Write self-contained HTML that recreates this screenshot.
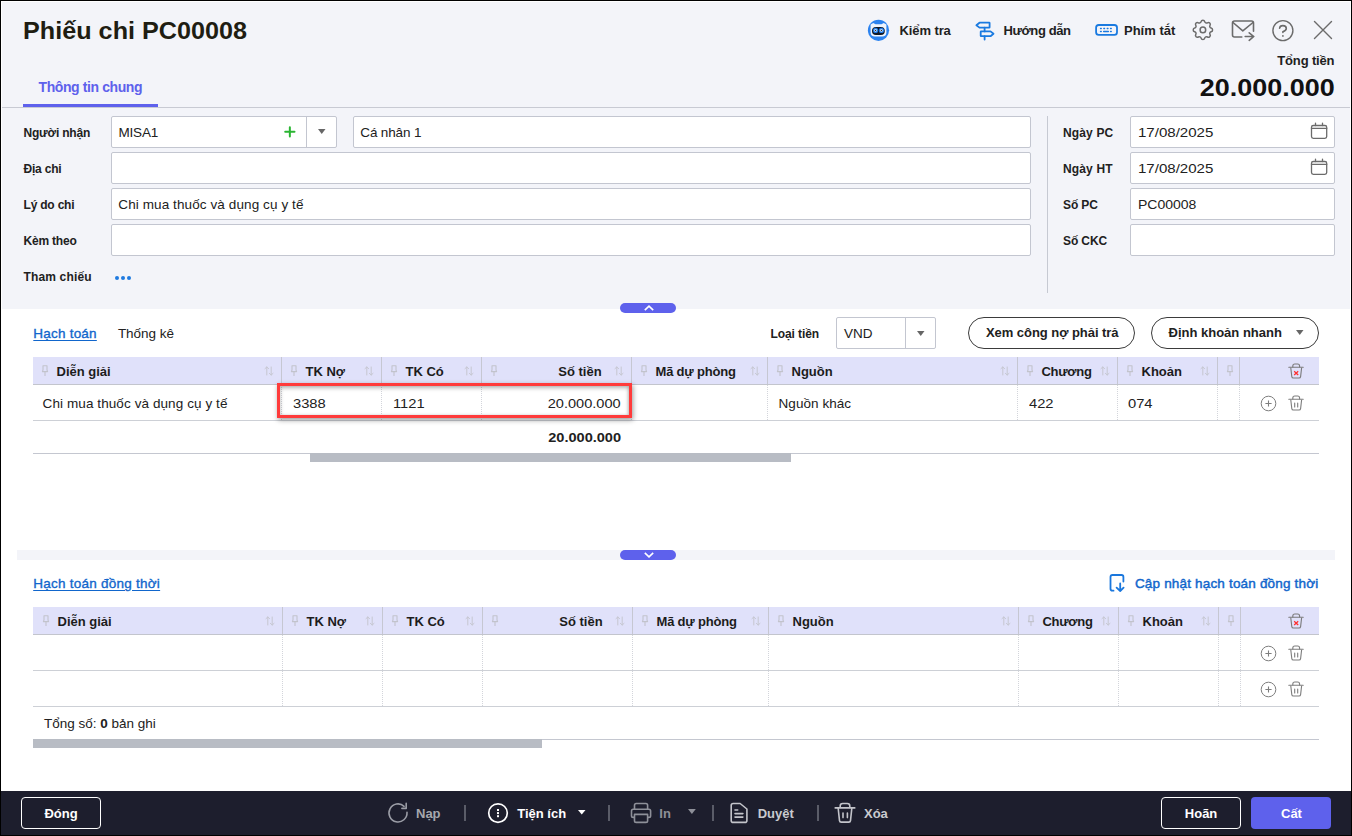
<!DOCTYPE html>
<html><head><meta charset="utf-8"><style>
html,body{margin:0;padding:0;width:1352px;height:836px;overflow:hidden;background:#fff}
body{position:relative;font-family:"Liberation Sans", sans-serif}
.t{position:absolute;white-space:nowrap;line-height:1}
.r{position:absolute}
svg.r{overflow:visible}
</style></head><body>
<div class="r" style="left:0px;top:0px;width:1352px;height:836px;background:#000"></div>
<div class="r" style="left:1px;top:1px;width:1350px;height:834px;background:#fff"></div>
<div class="r" style="left:2px;top:2px;width:1348px;height:307px;background:#f3f4f9"></div>
<div class="t" style="left:22.7px;top:19.38px;font-size:24px;font-weight:bold;color:#201d12;letter-spacing:0px;transform:scaleX(1.05);transform-origin:0 50%">Phiếu chi PC00008</div>
<div class="t" style="left:38.5px;top:79.65px;font-size:14px;font-weight:bold;color:#5e61ec;letter-spacing:-0.4px;">Thông tin chung</div>
<div class="r" style="left:23px;top:104px;width:135px;height:3px;background:#5e61ec"></div>
<div class="r" style="left:2px;top:107px;width:1348px;height:1px;background:#c8cad3"></div>
<div class="t" style="left:899.5px;top:23.90px;font-size:13px;font-weight:bold;color:#212121;letter-spacing:-0.1px;">Kiểm tra</div>
<div class="t" style="left:1003.5px;top:23.90px;font-size:13px;font-weight:bold;color:#212121;letter-spacing:-0.4px;">Hướng dẫn</div>
<div class="t" style="left:1124px;top:23.90px;font-size:13px;font-weight:bold;color:#212121;letter-spacing:0px;">Phím tắt</div>
<div class="t" style="right:17.59999999999991px;top:53.90px;font-size:13px;font-weight:bold;color:#212121;letter-spacing:-0.15px;">Tổng tiền</div>
<div class="t" style="right:17.40000000000009px;top:75.96px;font-size:24.5px;font-weight:bold;color:#111;letter-spacing:0px;transform:scaleX(1.1);transform-origin:100% 50%">20.000.000</div>
<div class="t" style="left:23.5px;top:127.34px;font-size:12px;font-weight:bold;color:#212121;letter-spacing:-0.2px;">Người nhận</div>
<div class="t" style="left:23.5px;top:163.14px;font-size:12px;font-weight:bold;color:#212121;letter-spacing:-0.2px;">Địa chi</div>
<div class="t" style="left:23.5px;top:199.04px;font-size:12px;font-weight:bold;color:#212121;letter-spacing:-0.2px;">Lý do chi</div>
<div class="t" style="left:23.5px;top:235.14px;font-size:12px;font-weight:bold;color:#212121;letter-spacing:-0.2px;">Kèm theo</div>
<div class="t" style="left:23.5px;top:270.94px;font-size:12px;font-weight:bold;color:#212121;letter-spacing:0.15px;">Tham chiếu</div>
<div class="r" style="left:111px;top:116px;width:226px;height:32px;background:#fff;border:1px solid #c3c6d0;border-radius:2px;box-sizing:border-box"></div>
<div class="r" style="left:306px;top:117px;width:1px;height:30px;background:#c3c6d0"></div>
<div class="r" style="left:353px;top:116px;width:678px;height:32px;background:#fff;border:1px solid #c3c6d0;border-radius:2px;box-sizing:border-box"></div>
<div class="r" style="left:111px;top:152px;width:920px;height:32px;background:#fff;border:1px solid #c3c6d0;border-radius:2px;box-sizing:border-box"></div>
<div class="r" style="left:111px;top:188px;width:920px;height:32px;background:#fff;border:1px solid #c3c6d0;border-radius:2px;box-sizing:border-box"></div>
<div class="r" style="left:111px;top:224px;width:920px;height:32px;background:#fff;border:1px solid #c3c6d0;border-radius:2px;box-sizing:border-box"></div>
<div class="t" style="left:118.5px;top:125.67px;font-size:13.5px;font-weight:normal;color:#212121;letter-spacing:-0.2px;">MISA1</div>
<div class="t" style="left:360.3px;top:125.67px;font-size:13.5px;font-weight:normal;color:#212121;letter-spacing:-0.15px;">Cá nhân 1</div>
<div class="t" style="left:118.3px;top:197.67px;font-size:13.5px;font-weight:normal;color:#212121;letter-spacing:0.1px;">Chi mua thuốc và dụng cụ y tế</div>
<div class="r" style="left:1047px;top:116px;width:1px;height:177px;background:#c6c9d2"></div>
<div class="t" style="left:1063px;top:127.34px;font-size:12px;font-weight:bold;color:#212121;letter-spacing:0.15px;">Ngày PC</div>
<div class="t" style="left:1063px;top:163.14px;font-size:12px;font-weight:bold;color:#212121;letter-spacing:0.15px;">Ngày HT</div>
<div class="t" style="left:1063px;top:199.04px;font-size:12px;font-weight:bold;color:#212121;letter-spacing:-0.1px;">Số PC</div>
<div class="t" style="left:1063px;top:235.14px;font-size:12px;font-weight:bold;color:#212121;letter-spacing:-0.1px;">Số CKC</div>
<div class="r" style="left:1130px;top:116px;width:205px;height:32px;background:#fff;border:1px solid #c3c6d0;border-radius:2px;box-sizing:border-box"></div>
<div class="r" style="left:1130px;top:152px;width:205px;height:32px;background:#fff;border:1px solid #c3c6d0;border-radius:2px;box-sizing:border-box"></div>
<div class="r" style="left:1130px;top:188px;width:205px;height:32px;background:#fff;border:1px solid #c3c6d0;border-radius:2px;box-sizing:border-box"></div>
<div class="r" style="left:1130px;top:224px;width:205px;height:32px;background:#fff;border:1px solid #c3c6d0;border-radius:2px;box-sizing:border-box"></div>
<div class="t" style="left:1137.5px;top:125.67px;font-size:13.5px;font-weight:normal;color:#212121;letter-spacing:0px;transform:scaleX(1.115);transform-origin:0 50%">17/08/2025</div>
<div class="t" style="left:1137.5px;top:161.67px;font-size:13.5px;font-weight:normal;color:#212121;letter-spacing:0px;transform:scaleX(1.115);transform-origin:0 50%">17/08/2025</div>
<div class="t" style="left:1137.5px;top:197.67px;font-size:13.5px;font-weight:normal;color:#212121;letter-spacing:0px;transform:scaleX(1.037);transform-origin:0 50%">PC00008</div>
<div class="r" style="left:620px;top:303px;width:56px;height:10px;background:#5e61ec;border-radius:5px"></div>
<div class="t" style="left:33.3px;top:326.97px;font-size:13.5px;font-weight:normal;color:#1166cc;letter-spacing:0.22px;text-decoration:underline;text-underline-offset:2px;-webkit-text-stroke:0.35px #1166cc">Hạch toán</div>
<div class="t" style="left:117.9px;top:326.97px;font-size:13.5px;font-weight:normal;color:#212121;letter-spacing:-0.04px;">Thống kê</div>
<div class="t" style="left:770.5px;top:328.04px;font-size:12px;font-weight:bold;color:#212121;letter-spacing:-0.1px;">Loại tiền</div>
<div class="r" style="left:836px;top:317px;width:100px;height:32px;background:#fff;border:1px solid #c3c6d0;border-radius:2px;box-sizing:border-box"></div>
<div class="r" style="left:905px;top:318px;width:1px;height:30px;background:#c3c6d0"></div>
<div class="t" style="left:844px;top:326.67px;font-size:13.5px;font-weight:normal;color:#212121;letter-spacing:0px;">VND</div>
<div class="r" style="left:968px;top:317px;width:167px;height:32px;border:1px solid #3b3b3b;border-radius:16px;box-sizing:border-box;background:#fff"></div>
<div class="t" style="left:986px;top:326.40px;font-size:13px;font-weight:bold;color:#212121;letter-spacing:-0.05px;">Xem công nợ phải trả</div>
<div class="r" style="left:1151px;top:317px;width:168px;height:32px;border:1px solid #3b3b3b;border-radius:16px;box-sizing:border-box;background:#fff"></div>
<div class="t" style="left:1168.5px;top:326.40px;font-size:13px;font-weight:bold;color:#212121;letter-spacing:0px;">Định khoản nhanh</div>
<div class="r" style="left:17px;top:550px;width:1318px;height:10px;background:#f3f4f9"></div>
<div class="r" style="left:620px;top:550px;width:56px;height:10px;background:#5e61ec;border-radius:5px"></div>
<div class="t" style="left:33.2px;top:576.97px;font-size:13.5px;font-weight:normal;color:#1166cc;letter-spacing:0.25px;text-decoration:underline;text-underline-offset:2px;-webkit-text-stroke:0.35px #1166cc">Hạch toán đồng thời</div>
<div class="t" style="left:1134.9px;top:577.07px;font-size:13.5px;font-weight:normal;color:#1166cc;letter-spacing:0.18px;-webkit-text-stroke:0.45px #1166cc">Cập nhật hạch toán đồng thời</div>
<div class="t" style="left:44px;top:717.27px;font-size:13.5px;font-weight:normal;color:#212121;letter-spacing:0px;">Tổng số: <b>0</b> bản ghi</div>
<svg class="r" style="left:866px;top:18px" width="26" height="26" viewBox="0 0 26 26">
<circle cx="12.5" cy="12.3" r="10.6" fill="#2c83f0"/>
<path d="M4.6 6.5 L7.3 5 L9.5 6.2 H15.5 L17.7 5 L20.4 6.5 V14.5 Q20.4 18.4 16 18.6 H9 Q4.6 18.4 4.6 14.5 Z" fill="#eef4fd"/>
<rect x="6" y="9" width="12.8" height="7.9" rx="3.9" fill="#101826"/>
<circle cx="9.6" cy="12.4" r="2.6" fill="#1e7be8"/><circle cx="15.4" cy="12.4" r="2.6" fill="#1e7be8"/>
<circle cx="9.6" cy="12.4" r="1.3" fill="#dfe9f7"/><circle cx="15.4" cy="12.4" r="1.3" fill="#dfe9f7"/>
<circle cx="9.6" cy="12.4" r="0.6" fill="#222"/><circle cx="15.4" cy="12.4" r="0.6" fill="#222"/>
</svg>
<svg class="r" style="left:972px;top:18px" width="26" height="26" viewBox="0 0 26 26">
<g fill="none" stroke="#1a7ae0" stroke-width="1.8" stroke-linejoin="round" stroke-linecap="round">
<path d="M4.4 7.3 L7.5 4.7 H17.2 Q17.6 4.7 17.6 5.1 V9.2 Q17.6 9.6 17.2 9.6 H7.5 Z"/>
<path d="M12.6 9.6 V13.4"/>
<path d="M8.7 13.8 Q8.7 13.4 9.1 13.4 H18.5 L21.5 15.8 L18.5 18.2 H9.1 Q8.7 18.2 8.7 17.8 Z"/>
<path d="M12.6 18.2 V21.5"/>
</g></svg>
<svg class="r" style="left:1092px;top:20px" width="28" height="20" viewBox="0 0 28 20">
<rect x="4.1" y="5" width="20.9" height="9.9" rx="2.6" fill="none" stroke="#1a7ae0" stroke-width="1.8"/>
<g stroke="#1a7ae0" stroke-width="1.3" stroke-linecap="round">
<path d="M8.5 8.5 H9.3 M11.8 8.5 H12.6 M15.2 8.5 H16 M18.5 8.5 H19.3 M8.5 11.5 H9.3 M11.6 11.5 H16.4 M18.5 11.5 H19.3"/>
</g></svg>
<svg class="r" style="left:1190px;top:17.1px" width="25.8" height="25.8" viewBox="0 0 24 24"><g fill="none" stroke="#6b6b6b" stroke-width="1.4" stroke-linecap="round" stroke-linejoin="round"><path d="M10.325 4.317c.426-1.756 2.924-1.756 3.35 0a1.724 1.724 0 0 0 2.573 1.066c1.543-.94 3.31.826 2.37 2.37a1.724 1.724 0 0 0 1.065 2.572c1.756.426 1.756 2.924 0 3.35a1.724 1.724 0 0 0-1.066 2.573c.94 1.543-.826 3.31-2.37 2.37a1.724 1.724 0 0 0-2.572 1.065c-.426 1.756-2.924 1.756-3.35 0a1.724 1.724 0 0 0-2.573-1.066c-1.543.94-3.31-.826-2.37-2.37a1.724 1.724 0 0 0-1.065-2.572c-1.756-.426-1.756-2.924 0-3.35a1.724 1.724 0 0 0 1.066-2.573c-.94-1.543.826-3.31 2.37-2.37.996.608 2.296.07 2.572-1.065z"/><circle cx="12" cy="12" r="2.6"/></g></svg>
<svg class="r" style="left:1230px;top:18px" width="28" height="26" viewBox="0 0 28 26">
<g fill="none" stroke="#6b6b6b" stroke-width="1.6" stroke-linecap="round" stroke-linejoin="round">
<path d="M11.8 19 H4.5 Q2.5 19 2.5 17 V5 Q2.5 3 4.5 3 H21.5 Q23.5 3 23.5 5 V13.2"/>
<path d="M3 4.5 L12.8 12.8 L23 4.5"/>
<path d="M15.2 18.5 H23.8 M19.2 14.8 L23.8 18.5 L19.2 22.3"/>
</g></svg>
<svg class="r" style="left:1270px;top:18px" width="26" height="26" viewBox="0 0 26 26">
<circle cx="12.9" cy="12.6" r="10" fill="none" stroke="#6b6b6b" stroke-width="1.4"/>
<path d="M9.6 10.2 Q9.8 7.6 12.9 7.6 Q16.3 7.6 16.3 10.4 Q16.3 12.3 12.9 13.7 V14.4" fill="none" stroke="#6b6b6b" stroke-width="1.6" stroke-linecap="round"/>
<circle cx="12.9" cy="17.9" r="0.9" fill="#6b6b6b"/></svg>
<svg class="r" style="left:1312px;top:19px" width="22" height="22" viewBox="0 0 22 22">
<path d="M2.5 2.6 L19.5 19.4 M19.5 2.6 L2.5 19.4" stroke="#6b6b6b" stroke-width="1.4" stroke-linecap="round"/></svg>
<svg class="r" style="left:282px;top:124px" width="16" height="16" viewBox="0 0 16 16"><path d="M7.85 3.2 V12.5 M3.2 7.85 H12.5" stroke="#2ab532" stroke-width="2" stroke-linecap="round"/></svg>
<svg class="r" style="left:318.25px;top:129.0px" width="7.5" height="5" viewBox="0 0 7.5 5"><path d="M0 0 H7.5 L3.75 5 Z" fill="#666"/></svg>
<svg class="r" style="left:917.25px;top:330.5px" width="7.5" height="5" viewBox="0 0 7.5 5"><path d="M0 0 H7.5 L3.75 5 Z" fill="#666"/></svg>
<svg class="r" style="left:1296.25px;top:330.0px" width="7.5" height="5" viewBox="0 0 7.5 5"><path d="M0 0 H7.5 L3.75 5 Z" fill="#666"/></svg>
<svg class="r" style="left:1308px;top:121px" width="22" height="22" viewBox="0 0 22 22"><g fill="none" stroke="#6b6b6b" stroke-width="1.3" stroke-linecap="round">
<rect x="3.5" y="4.5" width="15.2" height="12.9" rx="1.8"/><path d="M3.5 7.4 H18.7 M7.5 2.1 V4.5 M14.5 2.1 V4.5"/></g></svg>
<svg class="r" style="left:1308px;top:157px" width="22" height="22" viewBox="0 0 22 22"><g fill="none" stroke="#6b6b6b" stroke-width="1.3" stroke-linecap="round">
<rect x="3.5" y="4.5" width="15.2" height="12.9" rx="1.8"/><path d="M3.5 7.4 H18.7 M7.5 2.1 V4.5 M14.5 2.1 V4.5"/></g></svg>
<div class="r" style="left:114.7px;top:275.5px;width:4.6px;height:4.6px;background:#1f7ae0;border-radius:50%"></div>
<div class="r" style="left:120.7px;top:275.5px;width:4.6px;height:4.6px;background:#1f7ae0;border-radius:50%"></div>
<div class="r" style="left:126.7px;top:275.5px;width:4.6px;height:4.6px;background:#1f7ae0;border-radius:50%"></div>
<svg class="r" style="left:644px;top:305px" width="10" height="6" viewBox="0 0 10 6"><path d="M0.8 5.2 L5 1.2 L9.2 5.2" fill="none" stroke="#fff" stroke-width="1.6"/></svg>
<svg class="r" style="left:644px;top:552px" width="10" height="6" viewBox="0 0 10 6"><path d="M0.8 0.8 L5 4.8 L9.2 0.8" fill="none" stroke="#fff" stroke-width="1.6"/></svg>
<svg class="r" style="left:1104px;top:570px" width="26" height="26" viewBox="0 0 26 26"><g fill="none" stroke="#1a77dd" stroke-width="1.8" stroke-linecap="round" stroke-linejoin="round">
<path d="M9.5 20.7 H8.4 Q6.5 20.7 6.5 18.8 V6.9 Q6.5 5 8.4 5 H17.5 Q19.4 5 19.4 6.9 V11.5"/>
<path d="M16.2 13.4 V21 M12.6 17.6 L16.2 21 L19.6 17.6"/></g></svg>
<div class="r" style="left:33px;top:357px;width:1286px;height:27px;background:#e0e1fa"></div>
<div class="r" style="left:33px;top:384px;width:1286px;height:1px;background:#c3c5cd"></div>
<div class="r" style="left:281px;top:357px;width:1px;height:27px;background:#c6c7d2"></div>
<div class="r" style="left:381px;top:357px;width:1px;height:27px;background:#c6c7d2"></div>
<div class="r" style="left:481px;top:357px;width:1px;height:27px;background:#c6c7d2"></div>
<div class="r" style="left:631px;top:357px;width:1px;height:27px;background:#c6c7d2"></div>
<div class="r" style="left:767px;top:357px;width:1px;height:27px;background:#c6c7d2"></div>
<div class="r" style="left:1017px;top:357px;width:1px;height:27px;background:#c6c7d2"></div>
<div class="r" style="left:1117px;top:357px;width:1px;height:27px;background:#c6c7d2"></div>
<div class="r" style="left:1217px;top:357px;width:1px;height:27px;background:#c6c7d2"></div>
<div class="r" style="left:1239px;top:357px;width:1px;height:27px;background:#c6c7d2"></div>
<svg class="r" style="left:41px;top:365px" width="8" height="12" viewBox="0 0 8 12"><g fill="none" stroke="#c2c3cc" stroke-width="1.1" stroke-linejoin="round">
<path d="M2 0.8 H6 V5 L6.6 6.6 H1.4 L2 5 Z"/><path d="M4 6.6 V11"/></g></svg>
<svg class="r" style="left:264px;top:366.3px" width="10" height="10" viewBox="0 0 10 10"><g fill="none" stroke="#c6c7d1" stroke-width="1" stroke-linecap="round" stroke-linejoin="round">
<path d="M2.8 9 V1 M1 2.6 L2.8 1 L4.6 2.6"/><path d="M7.2 1 V9 M5.4 7.4 L7.2 9 L9 7.4"/></g></svg>
<div class="t" style="left:56.5px;top:364.90px;font-size:13px;font-weight:bold;color:#1c1c1c;letter-spacing:0px;">Diễn giải</div>
<svg class="r" style="left:290px;top:365px" width="8" height="12" viewBox="0 0 8 12"><g fill="none" stroke="#c2c3cc" stroke-width="1.1" stroke-linejoin="round">
<path d="M2 0.8 H6 V5 L6.6 6.6 H1.4 L2 5 Z"/><path d="M4 6.6 V11"/></g></svg>
<svg class="r" style="left:364px;top:366.3px" width="10" height="10" viewBox="0 0 10 10"><g fill="none" stroke="#c6c7d1" stroke-width="1" stroke-linecap="round" stroke-linejoin="round">
<path d="M2.8 9 V1 M1 2.6 L2.8 1 L4.6 2.6"/><path d="M7.2 1 V9 M5.4 7.4 L7.2 9 L9 7.4"/></g></svg>
<div class="t" style="left:305.5px;top:364.90px;font-size:13px;font-weight:bold;color:#1c1c1c;letter-spacing:0px;">TK Nợ</div>
<svg class="r" style="left:390px;top:365px" width="8" height="12" viewBox="0 0 8 12"><g fill="none" stroke="#c2c3cc" stroke-width="1.1" stroke-linejoin="round">
<path d="M2 0.8 H6 V5 L6.6 6.6 H1.4 L2 5 Z"/><path d="M4 6.6 V11"/></g></svg>
<svg class="r" style="left:464px;top:366.3px" width="10" height="10" viewBox="0 0 10 10"><g fill="none" stroke="#c6c7d1" stroke-width="1" stroke-linecap="round" stroke-linejoin="round">
<path d="M2.8 9 V1 M1 2.6 L2.8 1 L4.6 2.6"/><path d="M7.2 1 V9 M5.4 7.4 L7.2 9 L9 7.4"/></g></svg>
<div class="t" style="left:405.5px;top:364.90px;font-size:13px;font-weight:bold;color:#1c1c1c;letter-spacing:0px;">TK Có</div>
<svg class="r" style="left:490px;top:365px" width="8" height="12" viewBox="0 0 8 12"><g fill="none" stroke="#c2c3cc" stroke-width="1.1" stroke-linejoin="round">
<path d="M2 0.8 H6 V5 L6.6 6.6 H1.4 L2 5 Z"/><path d="M4 6.6 V11"/></g></svg>
<svg class="r" style="left:614px;top:366.3px" width="10" height="10" viewBox="0 0 10 10"><g fill="none" stroke="#c6c7d1" stroke-width="1" stroke-linecap="round" stroke-linejoin="round">
<path d="M2.8 9 V1 M1 2.6 L2.8 1 L4.6 2.6"/><path d="M7.2 1 V9 M5.4 7.4 L7.2 9 L9 7.4"/></g></svg>
<div class="t" style="right:750.4px;top:364.90px;font-size:13px;font-weight:bold;color:#1c1c1c;letter-spacing:0px;">Số tiền</div>
<svg class="r" style="left:640px;top:365px" width="8" height="12" viewBox="0 0 8 12"><g fill="none" stroke="#c2c3cc" stroke-width="1.1" stroke-linejoin="round">
<path d="M2 0.8 H6 V5 L6.6 6.6 H1.4 L2 5 Z"/><path d="M4 6.6 V11"/></g></svg>
<svg class="r" style="left:750px;top:366.3px" width="10" height="10" viewBox="0 0 10 10"><g fill="none" stroke="#c6c7d1" stroke-width="1" stroke-linecap="round" stroke-linejoin="round">
<path d="M2.8 9 V1 M1 2.6 L2.8 1 L4.6 2.6"/><path d="M7.2 1 V9 M5.4 7.4 L7.2 9 L9 7.4"/></g></svg>
<div class="t" style="left:655.5px;top:364.90px;font-size:13px;font-weight:bold;color:#1c1c1c;letter-spacing:-0.2px;">Mã dự phòng</div>
<svg class="r" style="left:776px;top:365px" width="8" height="12" viewBox="0 0 8 12"><g fill="none" stroke="#c2c3cc" stroke-width="1.1" stroke-linejoin="round">
<path d="M2 0.8 H6 V5 L6.6 6.6 H1.4 L2 5 Z"/><path d="M4 6.6 V11"/></g></svg>
<svg class="r" style="left:1000px;top:366.3px" width="10" height="10" viewBox="0 0 10 10"><g fill="none" stroke="#c6c7d1" stroke-width="1" stroke-linecap="round" stroke-linejoin="round">
<path d="M2.8 9 V1 M1 2.6 L2.8 1 L4.6 2.6"/><path d="M7.2 1 V9 M5.4 7.4 L7.2 9 L9 7.4"/></g></svg>
<div class="t" style="left:791.5px;top:364.90px;font-size:13px;font-weight:bold;color:#1c1c1c;letter-spacing:0px;">Nguồn</div>
<svg class="r" style="left:1026px;top:365px" width="8" height="12" viewBox="0 0 8 12"><g fill="none" stroke="#c2c3cc" stroke-width="1.1" stroke-linejoin="round">
<path d="M2 0.8 H6 V5 L6.6 6.6 H1.4 L2 5 Z"/><path d="M4 6.6 V11"/></g></svg>
<svg class="r" style="left:1100px;top:366.3px" width="10" height="10" viewBox="0 0 10 10"><g fill="none" stroke="#c6c7d1" stroke-width="1" stroke-linecap="round" stroke-linejoin="round">
<path d="M2.8 9 V1 M1 2.6 L2.8 1 L4.6 2.6"/><path d="M7.2 1 V9 M5.4 7.4 L7.2 9 L9 7.4"/></g></svg>
<div class="t" style="left:1041.5px;top:364.90px;font-size:13px;font-weight:bold;color:#1c1c1c;letter-spacing:-0.3px;">Chương</div>
<svg class="r" style="left:1126px;top:365px" width="8" height="12" viewBox="0 0 8 12"><g fill="none" stroke="#c2c3cc" stroke-width="1.1" stroke-linejoin="round">
<path d="M2 0.8 H6 V5 L6.6 6.6 H1.4 L2 5 Z"/><path d="M4 6.6 V11"/></g></svg>
<svg class="r" style="left:1200px;top:366.3px" width="10" height="10" viewBox="0 0 10 10"><g fill="none" stroke="#c6c7d1" stroke-width="1" stroke-linecap="round" stroke-linejoin="round">
<path d="M2.8 9 V1 M1 2.6 L2.8 1 L4.6 2.6"/><path d="M7.2 1 V9 M5.4 7.4 L7.2 9 L9 7.4"/></g></svg>
<div class="t" style="left:1141.5px;top:364.90px;font-size:13px;font-weight:bold;color:#1c1c1c;letter-spacing:0px;">Khoản</div>
<svg class="r" style="left:1226px;top:365px" width="8" height="12" viewBox="0 0 8 12"><g fill="none" stroke="#c2c3cc" stroke-width="1.1" stroke-linejoin="round">
<path d="M2 0.8 H6 V5 L6.6 6.6 H1.4 L2 5 Z"/><path d="M4 6.6 V11"/></g></svg>
<svg class="r" style="left:1288px;top:363px" width="16" height="16" viewBox="0 0 16 16"><g fill="none" stroke="#7a7a7a" stroke-width="1.1" stroke-linecap="round" stroke-linejoin="round">
<path d="M0.8 4.2 H15.2"/><path d="M4.8 4 V3 Q4.8 1 6.8 1 H9.6 Q11.6 1 11.6 3 V4"/>
<path d="M2.8 5 L3.8 13.6 Q4 15 5.4 15 H11 Q12.4 15 12.6 13.6 L13.6 5"/></g><path d="M6.2 8.2 L10.2 12 M10.2 8.2 L6.2 12" stroke="#ff2d2d" stroke-width="1.2"/></svg>
<div class="r" style="left:281px;top:385px;width:1px;height:35px;background:repeating-linear-gradient(to bottom,#d3d5db 0 1px,transparent 1px 2px)"></div>
<div class="r" style="left:381px;top:385px;width:1px;height:35px;background:repeating-linear-gradient(to bottom,#d3d5db 0 1px,transparent 1px 2px)"></div>
<div class="r" style="left:481px;top:385px;width:1px;height:35px;background:repeating-linear-gradient(to bottom,#d3d5db 0 1px,transparent 1px 2px)"></div>
<div class="r" style="left:631px;top:385px;width:1px;height:35px;background:repeating-linear-gradient(to bottom,#d3d5db 0 1px,transparent 1px 2px)"></div>
<div class="r" style="left:767px;top:385px;width:1px;height:35px;background:repeating-linear-gradient(to bottom,#d3d5db 0 1px,transparent 1px 2px)"></div>
<div class="r" style="left:1017px;top:385px;width:1px;height:35px;background:repeating-linear-gradient(to bottom,#d3d5db 0 1px,transparent 1px 2px)"></div>
<div class="r" style="left:1117px;top:385px;width:1px;height:35px;background:repeating-linear-gradient(to bottom,#d3d5db 0 1px,transparent 1px 2px)"></div>
<div class="r" style="left:1217px;top:385px;width:1px;height:35px;background:repeating-linear-gradient(to bottom,#d3d5db 0 1px,transparent 1px 2px)"></div>
<div class="r" style="left:1239px;top:385px;width:1px;height:35px;background:repeating-linear-gradient(to bottom,#d3d5db 0 1px,transparent 1px 2px)"></div>
<div class="r" style="left:33px;top:420px;width:1286px;height:1px;background:#cdd0d6"></div>
<svg class="r" style="left:1259.5px;top:394.5px" width="17" height="17" viewBox="0 0 17 17"><circle cx="8.5" cy="8.5" r="7.3" fill="none" stroke="#7d7d7d" stroke-width="1"/>
<path d="M8.5 5.4 V11.6 M5.4 8.5 H11.6" stroke="#7d7d7d" stroke-width="1.1"/></svg>
<svg class="r" style="left:1288px;top:395px" width="16" height="16" viewBox="0 0 16 16"><g fill="none" stroke="#7d7d7d" stroke-width="1.1" stroke-linecap="round" stroke-linejoin="round">
<path d="M0.8 4.2 H15.2"/><path d="M4.8 4 V3 Q4.8 1 6.8 1 H9.6 Q11.6 1 11.6 3 V4"/>
<path d="M2.8 5 L3.8 13.6 Q4 15 5.4 15 H11 Q12.4 15 12.6 13.6 L13.6 5"/><path d="M6.7 8 V12 M9.7 8 V12"/></g></svg>
<div class="t" style="left:42.6px;top:396.57px;font-size:13.5px;font-weight:normal;color:#212121;letter-spacing:0.09px;">Chi mua thuốc và dụng cụ y tế</div>
<div class="t" style="left:292.5px;top:396.57px;font-size:13.5px;font-weight:normal;color:#212121;letter-spacing:0px;transform:scaleX(1.09);transform-origin:0 50%">3388</div>
<div class="t" style="left:392.8px;top:396.57px;font-size:13.5px;font-weight:normal;color:#212121;letter-spacing:0px;transform:scaleX(1.09);transform-origin:0 50%">1121</div>
<div class="t" style="right:731.7px;top:396.57px;font-size:13.5px;font-weight:normal;color:#212121;letter-spacing:0px;transform:scaleX(1.078);transform-origin:100% 50%">20.000.000</div>
<div class="t" style="left:778.5px;top:396.57px;font-size:13.5px;font-weight:normal;color:#212121;letter-spacing:0.06px;">Nguồn khác</div>
<div class="t" style="left:1028.5px;top:396.57px;font-size:13.5px;font-weight:normal;color:#212121;letter-spacing:0px;transform:scaleX(1.09);transform-origin:0 50%">422</div>
<div class="t" style="left:1128.3px;top:396.57px;font-size:13.5px;font-weight:normal;color:#212121;letter-spacing:0px;transform:scaleX(1.09);transform-origin:0 50%">074</div>
<div class="t" style="right:730.6px;top:431.30px;font-size:13px;font-weight:bold;color:#212121;letter-spacing:0px;transform:scaleX(1.12);transform-origin:100% 50%">20.000.000</div>
<div class="r" style="left:33px;top:453px;width:1286px;height:1px;background:#c4c7d0"></div>
<div class="r" style="left:310px;top:453px;width:481px;height:9px;background:#b8bcc4"></div>
<div class="r" style="left:277px;top:383px;width:355px;height:35px;border:3px solid #ff3b3b;box-sizing:border-box;box-shadow:1px 2px 5px rgba(0,0,0,0.4), inset 0 2px 4px rgba(0,0,0,0.28), inset -1px 0 3px rgba(0,0,0,0.12)"></div>
<div class="r" style="left:33px;top:607px;width:1286px;height:27px;background:#e0e1fa"></div>
<div class="r" style="left:33px;top:634px;width:1286px;height:1px;background:#c3c5cd"></div>
<div class="r" style="left:282px;top:607px;width:1px;height:27px;background:#c6c7d2"></div>
<div class="r" style="left:382px;top:607px;width:1px;height:27px;background:#c6c7d2"></div>
<div class="r" style="left:482px;top:607px;width:1px;height:27px;background:#c6c7d2"></div>
<div class="r" style="left:632px;top:607px;width:1px;height:27px;background:#c6c7d2"></div>
<div class="r" style="left:768px;top:607px;width:1px;height:27px;background:#c6c7d2"></div>
<div class="r" style="left:1018px;top:607px;width:1px;height:27px;background:#c6c7d2"></div>
<div class="r" style="left:1118px;top:607px;width:1px;height:27px;background:#c6c7d2"></div>
<div class="r" style="left:1218px;top:607px;width:1px;height:27px;background:#c6c7d2"></div>
<div class="r" style="left:1240px;top:607px;width:1px;height:27px;background:#c6c7d2"></div>
<svg class="r" style="left:42px;top:615px" width="8" height="12" viewBox="0 0 8 12"><g fill="none" stroke="#c2c3cc" stroke-width="1.1" stroke-linejoin="round">
<path d="M2 0.8 H6 V5 L6.6 6.6 H1.4 L2 5 Z"/><path d="M4 6.6 V11"/></g></svg>
<svg class="r" style="left:265px;top:616.3px" width="10" height="10" viewBox="0 0 10 10"><g fill="none" stroke="#c6c7d1" stroke-width="1" stroke-linecap="round" stroke-linejoin="round">
<path d="M2.8 9 V1 M1 2.6 L2.8 1 L4.6 2.6"/><path d="M7.2 1 V9 M5.4 7.4 L7.2 9 L9 7.4"/></g></svg>
<div class="t" style="left:57.5px;top:614.90px;font-size:13px;font-weight:bold;color:#1c1c1c;letter-spacing:0px;">Diễn giải</div>
<svg class="r" style="left:291px;top:615px" width="8" height="12" viewBox="0 0 8 12"><g fill="none" stroke="#c2c3cc" stroke-width="1.1" stroke-linejoin="round">
<path d="M2 0.8 H6 V5 L6.6 6.6 H1.4 L2 5 Z"/><path d="M4 6.6 V11"/></g></svg>
<svg class="r" style="left:365px;top:616.3px" width="10" height="10" viewBox="0 0 10 10"><g fill="none" stroke="#c6c7d1" stroke-width="1" stroke-linecap="round" stroke-linejoin="round">
<path d="M2.8 9 V1 M1 2.6 L2.8 1 L4.6 2.6"/><path d="M7.2 1 V9 M5.4 7.4 L7.2 9 L9 7.4"/></g></svg>
<div class="t" style="left:306.5px;top:614.90px;font-size:13px;font-weight:bold;color:#1c1c1c;letter-spacing:0px;">TK Nợ</div>
<svg class="r" style="left:391px;top:615px" width="8" height="12" viewBox="0 0 8 12"><g fill="none" stroke="#c2c3cc" stroke-width="1.1" stroke-linejoin="round">
<path d="M2 0.8 H6 V5 L6.6 6.6 H1.4 L2 5 Z"/><path d="M4 6.6 V11"/></g></svg>
<svg class="r" style="left:465px;top:616.3px" width="10" height="10" viewBox="0 0 10 10"><g fill="none" stroke="#c6c7d1" stroke-width="1" stroke-linecap="round" stroke-linejoin="round">
<path d="M2.8 9 V1 M1 2.6 L2.8 1 L4.6 2.6"/><path d="M7.2 1 V9 M5.4 7.4 L7.2 9 L9 7.4"/></g></svg>
<div class="t" style="left:406.5px;top:614.90px;font-size:13px;font-weight:bold;color:#1c1c1c;letter-spacing:0px;">TK Có</div>
<svg class="r" style="left:491px;top:615px" width="8" height="12" viewBox="0 0 8 12"><g fill="none" stroke="#c2c3cc" stroke-width="1.1" stroke-linejoin="round">
<path d="M2 0.8 H6 V5 L6.6 6.6 H1.4 L2 5 Z"/><path d="M4 6.6 V11"/></g></svg>
<svg class="r" style="left:615px;top:616.3px" width="10" height="10" viewBox="0 0 10 10"><g fill="none" stroke="#c6c7d1" stroke-width="1" stroke-linecap="round" stroke-linejoin="round">
<path d="M2.8 9 V1 M1 2.6 L2.8 1 L4.6 2.6"/><path d="M7.2 1 V9 M5.4 7.4 L7.2 9 L9 7.4"/></g></svg>
<div class="t" style="right:749.4px;top:614.90px;font-size:13px;font-weight:bold;color:#1c1c1c;letter-spacing:0px;">Số tiền</div>
<svg class="r" style="left:641px;top:615px" width="8" height="12" viewBox="0 0 8 12"><g fill="none" stroke="#c2c3cc" stroke-width="1.1" stroke-linejoin="round">
<path d="M2 0.8 H6 V5 L6.6 6.6 H1.4 L2 5 Z"/><path d="M4 6.6 V11"/></g></svg>
<svg class="r" style="left:751px;top:616.3px" width="10" height="10" viewBox="0 0 10 10"><g fill="none" stroke="#c6c7d1" stroke-width="1" stroke-linecap="round" stroke-linejoin="round">
<path d="M2.8 9 V1 M1 2.6 L2.8 1 L4.6 2.6"/><path d="M7.2 1 V9 M5.4 7.4 L7.2 9 L9 7.4"/></g></svg>
<div class="t" style="left:656.5px;top:614.90px;font-size:13px;font-weight:bold;color:#1c1c1c;letter-spacing:-0.2px;">Mã dự phòng</div>
<svg class="r" style="left:777px;top:615px" width="8" height="12" viewBox="0 0 8 12"><g fill="none" stroke="#c2c3cc" stroke-width="1.1" stroke-linejoin="round">
<path d="M2 0.8 H6 V5 L6.6 6.6 H1.4 L2 5 Z"/><path d="M4 6.6 V11"/></g></svg>
<svg class="r" style="left:1001px;top:616.3px" width="10" height="10" viewBox="0 0 10 10"><g fill="none" stroke="#c6c7d1" stroke-width="1" stroke-linecap="round" stroke-linejoin="round">
<path d="M2.8 9 V1 M1 2.6 L2.8 1 L4.6 2.6"/><path d="M7.2 1 V9 M5.4 7.4 L7.2 9 L9 7.4"/></g></svg>
<div class="t" style="left:792.5px;top:614.90px;font-size:13px;font-weight:bold;color:#1c1c1c;letter-spacing:0px;">Nguồn</div>
<svg class="r" style="left:1027px;top:615px" width="8" height="12" viewBox="0 0 8 12"><g fill="none" stroke="#c2c3cc" stroke-width="1.1" stroke-linejoin="round">
<path d="M2 0.8 H6 V5 L6.6 6.6 H1.4 L2 5 Z"/><path d="M4 6.6 V11"/></g></svg>
<svg class="r" style="left:1101px;top:616.3px" width="10" height="10" viewBox="0 0 10 10"><g fill="none" stroke="#c6c7d1" stroke-width="1" stroke-linecap="round" stroke-linejoin="round">
<path d="M2.8 9 V1 M1 2.6 L2.8 1 L4.6 2.6"/><path d="M7.2 1 V9 M5.4 7.4 L7.2 9 L9 7.4"/></g></svg>
<div class="t" style="left:1042.5px;top:614.90px;font-size:13px;font-weight:bold;color:#1c1c1c;letter-spacing:-0.3px;">Chương</div>
<svg class="r" style="left:1127px;top:615px" width="8" height="12" viewBox="0 0 8 12"><g fill="none" stroke="#c2c3cc" stroke-width="1.1" stroke-linejoin="round">
<path d="M2 0.8 H6 V5 L6.6 6.6 H1.4 L2 5 Z"/><path d="M4 6.6 V11"/></g></svg>
<svg class="r" style="left:1201px;top:616.3px" width="10" height="10" viewBox="0 0 10 10"><g fill="none" stroke="#c6c7d1" stroke-width="1" stroke-linecap="round" stroke-linejoin="round">
<path d="M2.8 9 V1 M1 2.6 L2.8 1 L4.6 2.6"/><path d="M7.2 1 V9 M5.4 7.4 L7.2 9 L9 7.4"/></g></svg>
<div class="t" style="left:1142.5px;top:614.90px;font-size:13px;font-weight:bold;color:#1c1c1c;letter-spacing:0px;">Khoản</div>
<svg class="r" style="left:1227px;top:615px" width="8" height="12" viewBox="0 0 8 12"><g fill="none" stroke="#c2c3cc" stroke-width="1.1" stroke-linejoin="round">
<path d="M2 0.8 H6 V5 L6.6 6.6 H1.4 L2 5 Z"/><path d="M4 6.6 V11"/></g></svg>
<svg class="r" style="left:1288px;top:613px" width="16" height="16" viewBox="0 0 16 16"><g fill="none" stroke="#7a7a7a" stroke-width="1.1" stroke-linecap="round" stroke-linejoin="round">
<path d="M0.8 4.2 H15.2"/><path d="M4.8 4 V3 Q4.8 1 6.8 1 H9.6 Q11.6 1 11.6 3 V4"/>
<path d="M2.8 5 L3.8 13.6 Q4 15 5.4 15 H11 Q12.4 15 12.6 13.6 L13.6 5"/></g><path d="M6.2 8.2 L10.2 12 M10.2 8.2 L6.2 12" stroke="#ff2d2d" stroke-width="1.2"/></svg>
<div class="r" style="left:282px;top:635px;width:1px;height:35px;background:repeating-linear-gradient(to bottom,#d3d5db 0 1px,transparent 1px 2px)"></div>
<div class="r" style="left:382px;top:635px;width:1px;height:35px;background:repeating-linear-gradient(to bottom,#d3d5db 0 1px,transparent 1px 2px)"></div>
<div class="r" style="left:482px;top:635px;width:1px;height:35px;background:repeating-linear-gradient(to bottom,#d3d5db 0 1px,transparent 1px 2px)"></div>
<div class="r" style="left:632px;top:635px;width:1px;height:35px;background:repeating-linear-gradient(to bottom,#d3d5db 0 1px,transparent 1px 2px)"></div>
<div class="r" style="left:768px;top:635px;width:1px;height:35px;background:repeating-linear-gradient(to bottom,#d3d5db 0 1px,transparent 1px 2px)"></div>
<div class="r" style="left:1018px;top:635px;width:1px;height:35px;background:repeating-linear-gradient(to bottom,#d3d5db 0 1px,transparent 1px 2px)"></div>
<div class="r" style="left:1118px;top:635px;width:1px;height:35px;background:repeating-linear-gradient(to bottom,#d3d5db 0 1px,transparent 1px 2px)"></div>
<div class="r" style="left:1218px;top:635px;width:1px;height:35px;background:repeating-linear-gradient(to bottom,#d3d5db 0 1px,transparent 1px 2px)"></div>
<div class="r" style="left:1240px;top:635px;width:1px;height:35px;background:repeating-linear-gradient(to bottom,#d3d5db 0 1px,transparent 1px 2px)"></div>
<div class="r" style="left:33px;top:670px;width:1286px;height:1px;background:#cdd0d6"></div>
<svg class="r" style="left:1259.5px;top:644.5px" width="17" height="17" viewBox="0 0 17 17"><circle cx="8.5" cy="8.5" r="7.3" fill="none" stroke="#7d7d7d" stroke-width="1"/>
<path d="M8.5 5.4 V11.6 M5.4 8.5 H11.6" stroke="#7d7d7d" stroke-width="1.1"/></svg>
<svg class="r" style="left:1288px;top:645px" width="16" height="16" viewBox="0 0 16 16"><g fill="none" stroke="#7d7d7d" stroke-width="1.1" stroke-linecap="round" stroke-linejoin="round">
<path d="M0.8 4.2 H15.2"/><path d="M4.8 4 V3 Q4.8 1 6.8 1 H9.6 Q11.6 1 11.6 3 V4"/>
<path d="M2.8 5 L3.8 13.6 Q4 15 5.4 15 H11 Q12.4 15 12.6 13.6 L13.6 5"/><path d="M6.7 8 V12 M9.7 8 V12"/></g></svg>
<div class="r" style="left:282px;top:671px;width:1px;height:35px;background:repeating-linear-gradient(to bottom,#d3d5db 0 1px,transparent 1px 2px)"></div>
<div class="r" style="left:382px;top:671px;width:1px;height:35px;background:repeating-linear-gradient(to bottom,#d3d5db 0 1px,transparent 1px 2px)"></div>
<div class="r" style="left:482px;top:671px;width:1px;height:35px;background:repeating-linear-gradient(to bottom,#d3d5db 0 1px,transparent 1px 2px)"></div>
<div class="r" style="left:632px;top:671px;width:1px;height:35px;background:repeating-linear-gradient(to bottom,#d3d5db 0 1px,transparent 1px 2px)"></div>
<div class="r" style="left:768px;top:671px;width:1px;height:35px;background:repeating-linear-gradient(to bottom,#d3d5db 0 1px,transparent 1px 2px)"></div>
<div class="r" style="left:1018px;top:671px;width:1px;height:35px;background:repeating-linear-gradient(to bottom,#d3d5db 0 1px,transparent 1px 2px)"></div>
<div class="r" style="left:1118px;top:671px;width:1px;height:35px;background:repeating-linear-gradient(to bottom,#d3d5db 0 1px,transparent 1px 2px)"></div>
<div class="r" style="left:1218px;top:671px;width:1px;height:35px;background:repeating-linear-gradient(to bottom,#d3d5db 0 1px,transparent 1px 2px)"></div>
<div class="r" style="left:1240px;top:671px;width:1px;height:35px;background:repeating-linear-gradient(to bottom,#d3d5db 0 1px,transparent 1px 2px)"></div>
<div class="r" style="left:33px;top:706px;width:1286px;height:1px;background:#cdd0d6"></div>
<svg class="r" style="left:1259.5px;top:680.5px" width="17" height="17" viewBox="0 0 17 17"><circle cx="8.5" cy="8.5" r="7.3" fill="none" stroke="#7d7d7d" stroke-width="1"/>
<path d="M8.5 5.4 V11.6 M5.4 8.5 H11.6" stroke="#7d7d7d" stroke-width="1.1"/></svg>
<svg class="r" style="left:1288px;top:681px" width="16" height="16" viewBox="0 0 16 16"><g fill="none" stroke="#7d7d7d" stroke-width="1.1" stroke-linecap="round" stroke-linejoin="round">
<path d="M0.8 4.2 H15.2"/><path d="M4.8 4 V3 Q4.8 1 6.8 1 H9.6 Q11.6 1 11.6 3 V4"/>
<path d="M2.8 5 L3.8 13.6 Q4 15 5.4 15 H11 Q12.4 15 12.6 13.6 L13.6 5"/><path d="M6.7 8 V12 M9.7 8 V12"/></g></svg>
<div class="r" style="left:33px;top:739px;width:1286px;height:1px;background:#c4c7d0"></div>
<div class="r" style="left:33px;top:739px;width:509px;height:9px;background:#b8bcc4"></div>
<div class="r" style="left:1px;top:791px;width:1350px;height:44px;background:#1d1e2d"></div>
<div class="r" style="left:21px;top:797px;width:80px;height:32px;border:1px solid #fff;border-radius:4px;box-sizing:border-box"></div>
<div class="t" style="left:44.4px;top:806.80px;font-size:13px;font-weight:bold;color:#fff;letter-spacing:0px;">Đóng</div>
<div class="r" style="left:1161px;top:797px;width:80px;height:32px;border:1px solid #fff;border-radius:4px;box-sizing:border-box"></div>
<div class="t" style="left:1184.8px;top:806.80px;font-size:13px;font-weight:bold;color:#fff;letter-spacing:0px;">Hoãn</div>
<div class="r" style="left:1251px;top:797px;width:80px;height:32px;background:#5e61ec;border-radius:4px"></div>
<div class="t" style="left:1281px;top:806.80px;font-size:13px;font-weight:bold;color:#fff;letter-spacing:0px;">Cất</div>
<div class="t" style="left:416px;top:806.80px;font-size:13px;font-weight:bold;color:#a6a7ad;letter-spacing:0px;">Nạp</div>
<div class="t" style="left:517.2px;top:806.80px;font-size:13px;font-weight:bold;color:#fff;letter-spacing:0px;">Tiện ích</div>
<div class="t" style="left:659.3px;top:806.80px;font-size:13px;font-weight:bold;color:#8e8f97;letter-spacing:0px;">In</div>
<div class="t" style="left:757.7px;top:806.80px;font-size:13px;font-weight:bold;color:#c9cacf;letter-spacing:0px;">Duyệt</div>
<div class="t" style="left:864px;top:806.80px;font-size:13px;font-weight:bold;color:#c9cacf;letter-spacing:0px;">Xóa</div>
<svg class="r" style="left:386px;top:801px" width="24" height="24" viewBox="0 0 24 24"><g fill="none" stroke="#9b9da6" stroke-width="1.6" stroke-linecap="round" stroke-linejoin="round">
<path d="M21 11.4 A9 9 0 1 1 18.1 5.3"/><path d="M20.2 2.4 V7.4 H15.9"/></g></svg>
<svg class="r" style="left:486px;top:801px" width="24" height="24" viewBox="0 0 24 24"><circle cx="12" cy="12.1" r="9.3" fill="none" stroke="#fff" stroke-width="1.7"/>
<rect x="11" y="8" width="2" height="2" fill="#fff"/><rect x="11" y="11.1" width="2" height="2" fill="#fff"/><rect x="11" y="14.2" width="2" height="2" fill="#fff"/></svg>
<svg class="r" style="left:578px;top:810px" width="7.5" height="4.5" viewBox="0 0 7.5 4.5"><path d="M0 0 H7.5 L3.75 4.5 Z" fill="#fff"/></svg>
<svg class="r" style="left:629px;top:801px" width="24" height="24" viewBox="0 0 24 24"><g fill="none" stroke="#8e9099" stroke-width="1.6" stroke-linejoin="round">
<path d="M5.5 8.2 V4.2 Q5.5 2.5 7.2 2.5 H16.9 Q18.6 2.5 18.6 4.2 V8.2"/>
<path d="M5.5 16.4 H4.2 Q2.5 16.4 2.5 14.7 V9.9 Q2.5 8.2 4.2 8.2 H19.9 Q21.6 8.2 21.6 9.9 V14.7 Q21.6 16.4 19.9 16.4 H18.6"/>
<path d="M5.5 13.4 H18.6 V19.7 Q18.6 21.4 16.9 21.4 H7.2 Q5.5 21.4 5.5 19.7 Z"/></g></svg>
<svg class="r" style="left:688px;top:809.2px" width="7.8" height="4.9" viewBox="0 0 7.8 4.9"><path d="M0 0 H7.8 L3.9 4.9 Z" fill="#8e9099"/></svg>
<svg class="r" style="left:727px;top:801px" width="24" height="24" viewBox="0 0 24 24"><g fill="none" stroke="#c3c4ca" stroke-width="1.6" stroke-linecap="round" stroke-linejoin="round">
<path d="M13.1 2.5 H6.2 Q4.2 2.5 4.2 4.5 V19.4 Q4.2 21.4 6.2 21.4 H17.9 Q19.9 21.4 19.9 19.4 V8 Z"/>
<path d="M8 9 H10.7 M8 12.6 H15.9 M8 16.1 H15.9"/></g></svg>
<svg class="r" style="left:833px;top:801px" width="24" height="24" viewBox="0 0 24 24"><g fill="none" stroke="#c3c4ca" stroke-width="1.6" stroke-linecap="round" stroke-linejoin="round">
<path d="M2.2 6.9 H21.8"/><path d="M7.2 6.5 V5 Q7.2 2.5 9.7 2.5 H14.3 Q16.8 2.5 16.8 5 V6.5"/>
<path d="M5.2 7.5 L6.5 19.6 Q6.7 21.1 8.2 21.1 H15.8 Q17.3 21.1 17.5 19.6 L18.8 7.5"/>
<path d="M10 12 V16.6 M14.4 12 V16.6"/></g></svg>
<div class="r" style="left:464px;top:805px;width:2px;height:16px;background:#5a5c68"></div>
<div class="r" style="left:608px;top:805px;width:2px;height:16px;background:#5a5c68"></div>
<div class="r" style="left:712px;top:805px;width:2px;height:16px;background:#5a5c68"></div>
<div class="r" style="left:817px;top:805px;width:2px;height:16px;background:#5a5c68"></div>
</body></html>
